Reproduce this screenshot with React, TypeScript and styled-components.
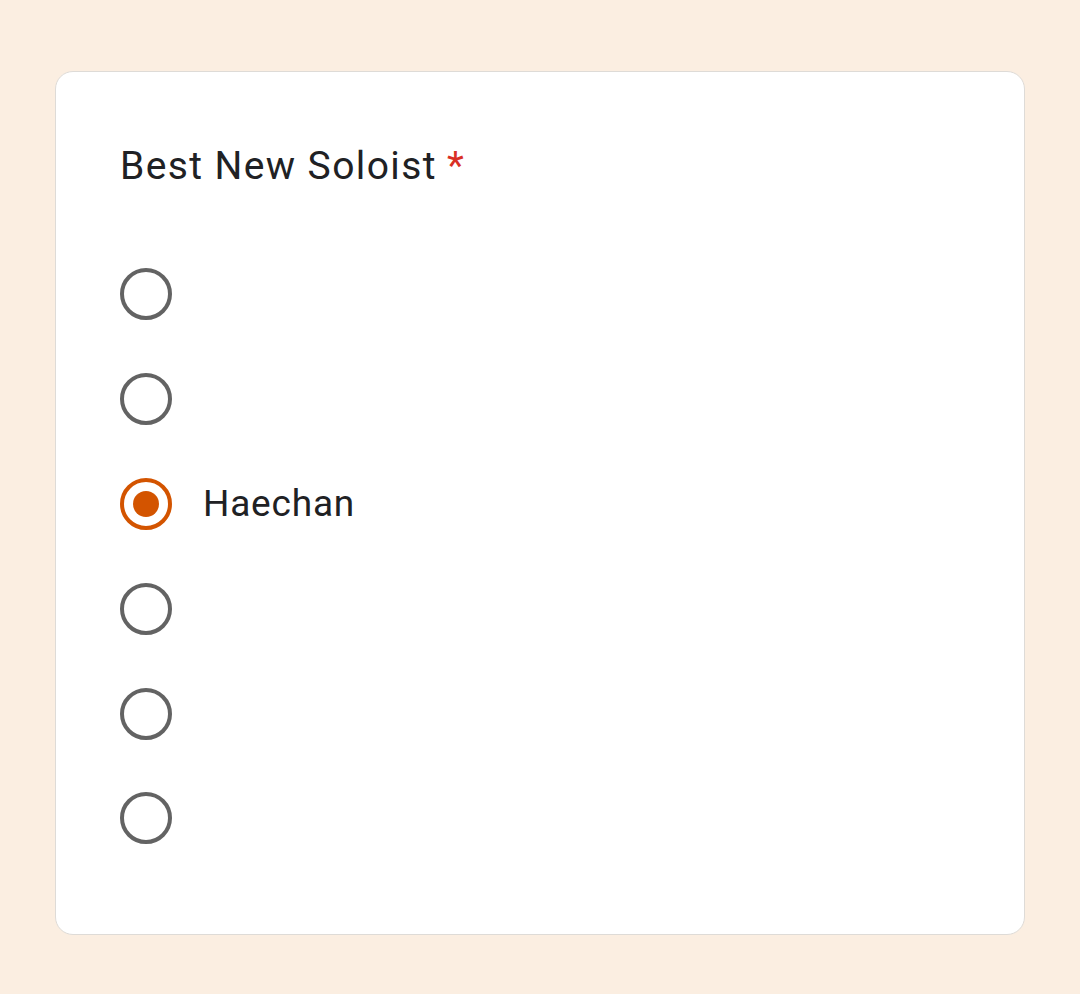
import React from "react";
import styled, { createGlobalStyle } from "styled-components";

const Global = createGlobalStyle`
  html, body { margin: 0; padding: 0; background: #fbeee1; }
  body { font-family: Roboto, "Noto Sans", Arial, sans-serif; }
`;

const Page = styled.div`
  min-height: 994px;
  padding: 71px 55px 0 55px;
  box-sizing: border-box;
`;

const Card = styled.div`
  background: #ffffff;
  border: 1.5px solid #dedbd7;
  border-radius: 18px;
  height: 864px;
  box-sizing: border-box;
  padding: 66px 64px 0 64px;
`;

const Title = styled.div`
  font-size: 39px;
  line-height: 56px;
  color: #202124;
  letter-spacing: 1.4px;
`;

const Star = styled.span`
  color: #d93025;
  margin-left: 10px;
`;

const Options = styled.div`
  margin-top: 48px;
  display: flex;
  flex-direction: column;
`;

const Row = styled.label`
  height: 104.8px;
  display: flex;
  align-items: center;
  gap: 31px;
`;

const Circle = styled.span<{ $checked?: boolean }>`
  width: 52px;
  height: 52px;
  border-radius: 50%;
  box-sizing: border-box;
  border: 4px solid ${(p) => (p.$checked ? "#d35400" : "#636363")};
  display: flex;
  align-items: center;
  justify-content: center;
  flex-shrink: 0;
`;

const Dot = styled.span`
  width: 26px;
  height: 26px;
  border-radius: 50%;
  background: #d35400;
`;

const Label = styled.span`
  font-size: 37px;
  color: #202124;
  letter-spacing: 0.8px;
`;

const options = ["", "", "Haechan", "", "", ""];

export default function App() {
  return (
    <>
      <Global />
      <Page>
        <Card>
          <Title>
            Best New Soloist<Star>*</Star>
          </Title>
          <Options>
            {options.map((o, i) => {
              const checked = o === "Haechan";
              return (
                <Row key={i}>
                  <Circle $checked={checked}>{checked && <Dot />}</Circle>
                  {o && <Label>{o}</Label>}
                </Row>
              );
            })}
          </Options>
        </Card>
      </Page>
    </>
  );
}
